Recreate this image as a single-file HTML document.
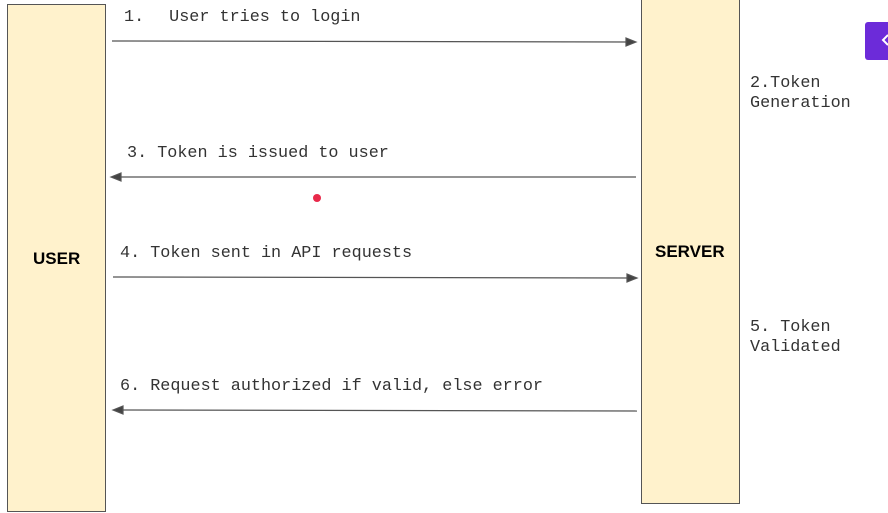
<!DOCTYPE html>
<html><head><style>
body{margin:0;width:888px;height:513px;background:#fff;position:relative;overflow:hidden;font-family:"Liberation Mono",monospace;}
.box{position:absolute;background:#fff2cc;border:1px solid #555;box-sizing:border-box;}
.lbl{position:absolute;font-family:"Liberation Sans",sans-serif;font-weight:bold;font-size:17px;color:#000;}
.t{position:absolute;font-size:16.8px;color:#333;white-space:pre;line-height:20px;}
</style></head><body>
<div class="box" style="left:7px;top:4px;width:99px;height:508px"></div>
<div class="box" style="left:641px;top:-2px;width:99px;height:506px"></div>
<div class="lbl" style="left:33px;top:249px">USER</div>
<div class="lbl" style="left:655px;top:242px">SERVER</div>
<div class="t" style="left:124px;top:8px">1.<span style="margin-left:25px">User tries to login</span></div>
<div class="t" style="left:127px;top:144px">3. Token is issued to user</div>
<div class="t" style="left:120px;top:244px">4. Token sent in API requests</div>
<div class="t" style="left:120px;top:377px">6. Request authorized if valid, else error</div>
<div class="t" style="left:750px;top:74px">2.Token
Generation</div>
<div class="t" style="left:750px;top:318px">5. Token
Validated</div>
<svg style="position:absolute;left:0;top:0" width="888" height="513">
<g stroke="#555" stroke-width="1.2" fill="#444">
<line x1="112" y1="41" x2="630" y2="42"/><polygon points="636,42 626,38 626,46"/>
<line x1="118" y1="177" x2="636" y2="177"/><polygon points="111,177 121,173 121,181"/>
<line x1="113" y1="277" x2="631" y2="278"/><polygon points="637,278 627,274 627,282"/>
<line x1="120" y1="410" x2="637" y2="411"/><polygon points="113,410 123,406 123,414"/>
</g>
<circle cx="317" cy="198" r="4" fill="#e8294a"/>
<rect x="865" y="22" width="30" height="38" rx="3" fill="#6c2bd9"/>
<path d="M888 35 l-5 5 l5 5" stroke="#fff" stroke-width="2" fill="none"/>
</svg>
</body></html>
